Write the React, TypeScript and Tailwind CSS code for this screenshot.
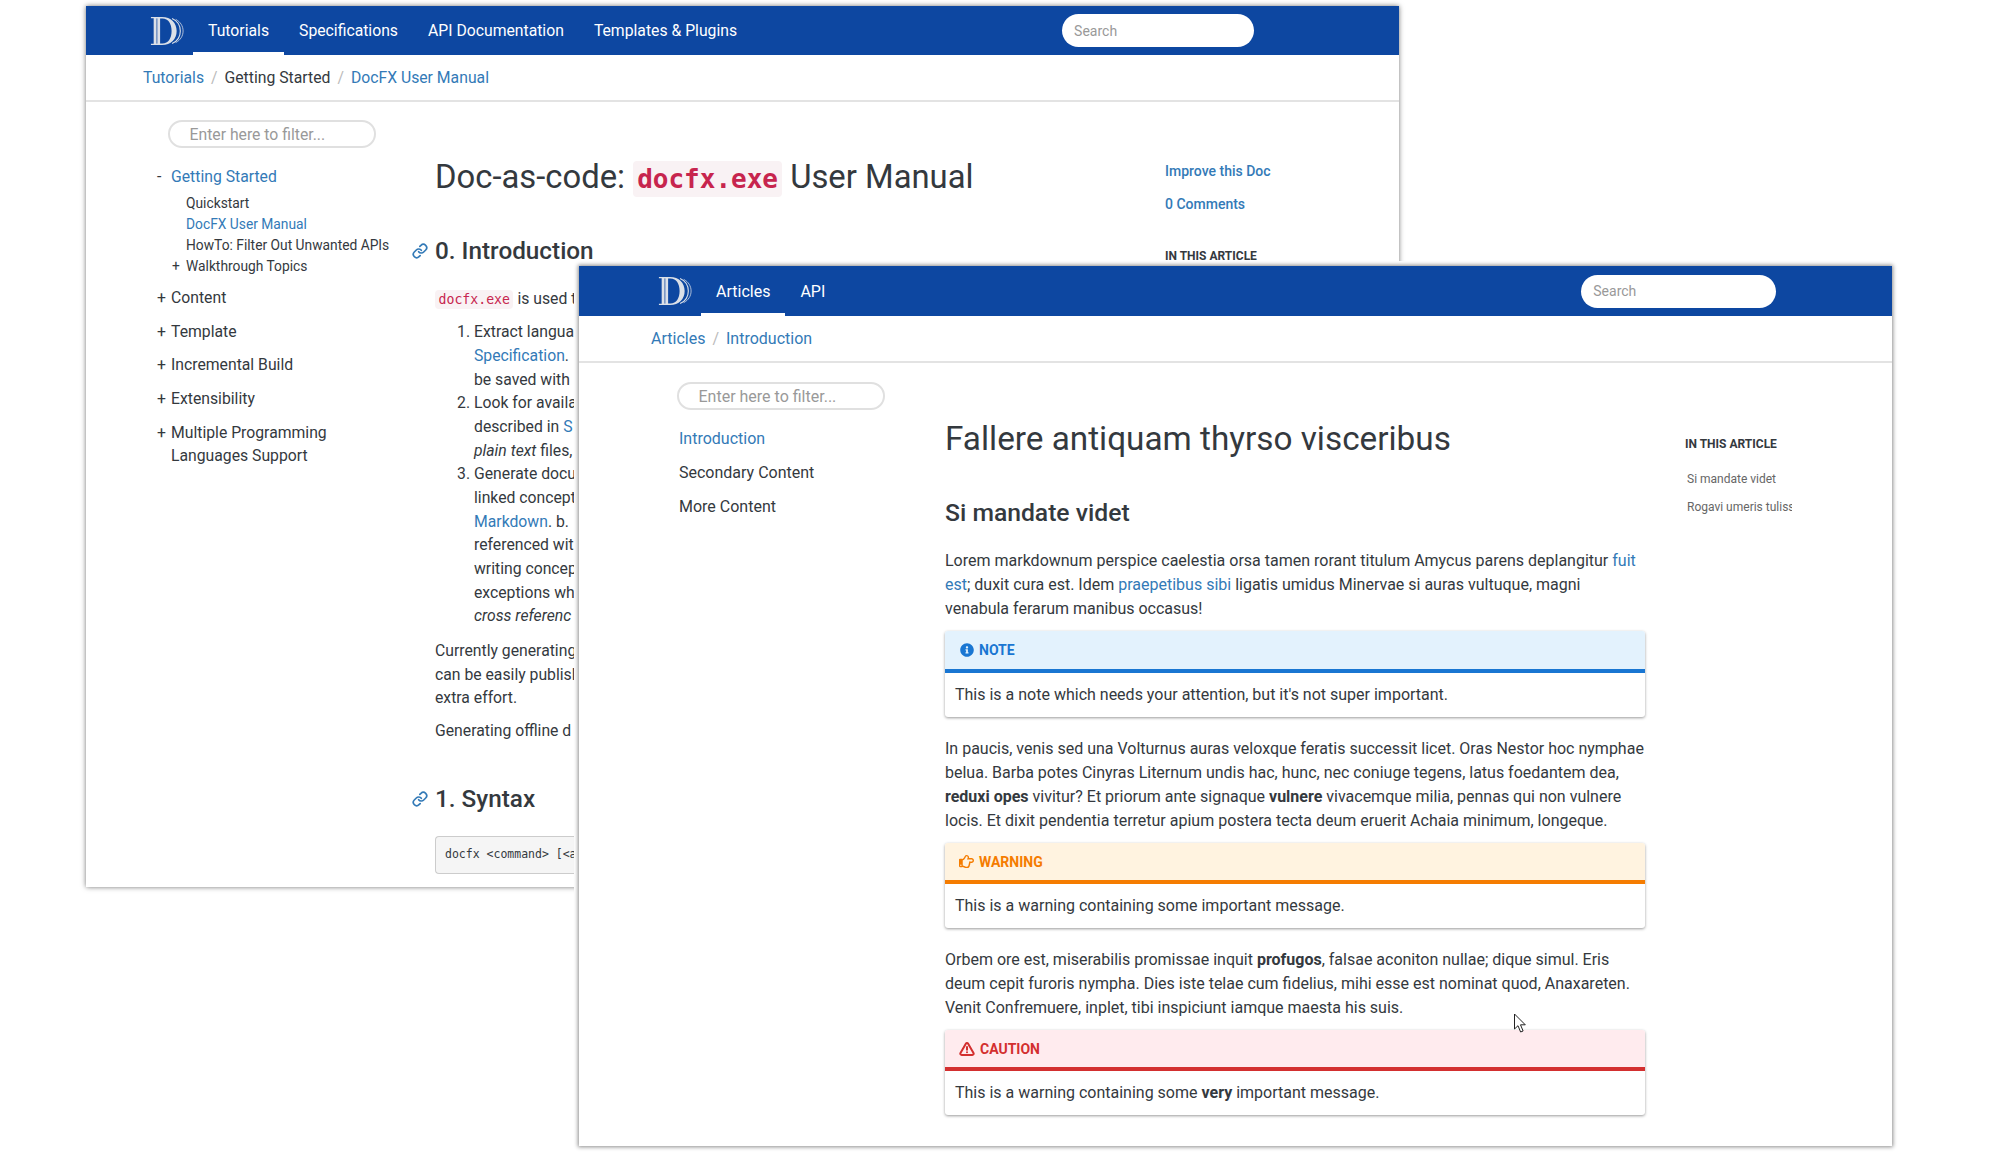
import { Link as LinkIcon, TriangleAlert } from "lucide-react";
import { FaInfoCircle, FaRegHandPointRight } from "react-icons/fa";

const LINK = "text-[#337ab7]";
const MONO = "font-['DejaVu_Sans_Mono',monospace]";

function Logo() {
  return (
    <svg width="34" height="30" viewBox="0 0 37 31" preserveAspectRatio="none">
      <path
        fillRule="evenodd"
        fill="#dbe0e8"
        d="M1 1h12c10 0 16 6.200 16 14.500S23 30 13 30H1v-1.300h3V2.300H1zM11 2.600v25.800h2.500c6.500 0 10-5.500 10-12.900S20 2.600 13.500 2.600z"
      />
      <path d="M7.500 2.500v26" stroke="#0d47a1" strokeWidth="0.800" fill="none" />
      <path d="M24 2.500c6 2.500 9 7 9 13s-3 10.500-9 13" stroke="#dbe0e8" strokeWidth="1.200" fill="none" />
      <path d="M28 3.500c5 2.500 8 6.800 8 12s-3 9.500-8 12" stroke="#dbe0e8" strokeWidth="0.800" fill="none" />
    </svg>
  );
}

function Header({ items, logoMargin, searchMargin, height, searchWidth, navPad }: { items: string[]; logoMargin: string; searchMargin: string; height: string; searchWidth: string; navPad: string }) {
  return (
    <div className={`flex items-center bg-[#0d47a1] shrink-0 ${height}`}>
      <div className={logoMargin}>
        <Logo />
      </div>
      <nav className="flex h-full">
        {items.map((item, i) => (
          <a key={item} className={`flex h-full items-center px-[15px] text-white border-b-[3px] ${navPad} ${i === 0 ? "border-white" : "border-transparent"}`}>
            {item}
          </a>
        ))}
      </nav>
      <input
        placeholder="Search"
        className={`rounded-full bg-white h-[33px] px-3 text-[14px] outline-none placeholder:text-[#999] ${searchWidth} ${searchMargin}`}
      />
    </div>
  );
}

function Filter() {
  return (
    <input
      placeholder="Enter here to filter..."
      className="block w-full h-full rounded-full border-2 border-[#e0e0e0] pl-[19.5px] outline-none placeholder:text-[#999]"
    />
  );
}

function ChainTitle({ children }: { children: React.ReactNode }) {
  return (
    <h2 className="flex items-center -ml-[23px] gap-[7px] h-[30px] text-[24.300px] font-medium leading-[30px] whitespace-nowrap">
      <LinkIcon size={16} strokeWidth={2.5} className="text-[#337ab7] shrink-0" />
      {children}
    </h2>
  );
}

function Line({ children }: { children: React.ReactNode }) {
  return <div className="whitespace-nowrap">{children}</div>;
}

function BackWindow() {
  return (
    <section className="absolute left-[86px] top-[6px] w-[1313px] h-[881px] overflow-hidden bg-white flex flex-col text-[15.750px] leading-[23.670px] shadow-[0_0_5px_rgba(0,0,0,0.55)]">
      <Header
        items={["Tutorials", "Specifications", "API Documentation", "Templates & Plugins"]}
        logoMargin="ml-[64px] mr-[9px]"
        searchMargin="ml-[310px]"
        height="h-[49px]"
        searchWidth="w-[192px]"
        navPad="pt-[3px]"
      />
      <div className="flex items-center gap-[7px] h-[44px] pl-[57px] pt-[1px] shrink-0 border-b-2 border-[#e3e3e3] box-content">
        <a className={LINK}>Tutorials</a>
        <span className="text-[#bbb]">/</span>
        <span>Getting Started</span>
        <span className="text-[#bbb]">/</span>
        <a className={LINK}>DocFX User Manual</a>
      </div>
      <div className="flex">
        <aside className="w-[349px] shrink-0 pt-[18px]">
          <div className="ml-[82px] w-[208px] h-[28px]">
            <Filter />
          </div>
          <div className="mt-[17px] ml-[71px] flex h-[24px] items-center">
            <span className="w-[14px]">-</span>
            <a className={LINK}>Getting Started</a>
          </div>
          <ul className="mt-[4px] ml-[100px] text-[13.800px] leading-[21px]">
            <li>Quickstart</li>
            <li className={LINK}>DocFX User Manual</li>
            <li>HowTo: Filter Out Unwanted APIs</li>
            <li className="relative">
              <span className="absolute -left-[14px]">+</span>
              Walkthrough Topics
            </li>
          </ul>
          <ul className="mt-[9px] ml-[71px] flex flex-col gap-[10px]">
            {["Content", "Template", "Incremental Build", "Extensibility"].map((t) => (
              <li key={t} className="flex">
                <span className="w-[14px]">+</span>
                {t}
              </li>
            ))}
            <li className="flex">
              <span className="w-[14px] shrink-0">+</span>
              <span>
                Multiple Programming
                <br />
                Languages Support
              </span>
            </li>
          </ul>
        </aside>
        <main className="w-[730px] shrink-0 pt-[55px]">
          <h1 className="text-[32.800px] leading-[40px] whitespace-nowrap">
            Doc-as-code:{" "}
            <code className={`${MONO} text-[26px] text-[#c7254e] bg-[#f9f2f4] rounded px-[4px] py-[3px] font-bold`}>docfx.exe</code>{" "}
            User Manual
          </h1>
          <div className="mt-[36.500px]">
            <ChainTitle>0. Introduction</ChainTitle>
          </div>
          <p className="mt-[21px] whitespace-nowrap">
            <code className={`${MONO} text-[13.200px] text-[#c7254e] bg-[#f9f2f4] rounded px-[3.500px] py-[2px]`}>docfx.exe</code> is used t
          </p>
          <ol className="mt-[9px] list-decimal pl-[39px]">
            <li>
              <Line>Extract langua</Line>
              <Line>
                <a className={LINK}>Specification</a>.
              </Line>
              <Line>be saved with</Line>
            </li>
            <li>
              <Line>Look for availa</Line>
              <Line>
                described in <a className={LINK}>S</a>
              </Line>
              <Line>
                <em>plain text</em> files,
              </Line>
            </li>
            <li>
              <Line>Generate docu</Line>
              <Line>linked concept</Line>
              <Line>
                <a className={LINK}>Markdown</a>. b.
              </Line>
              <Line>referenced wit</Line>
              <Line>writing concep</Line>
              <Line>exceptions wh</Line>
              <Line>
                <em>cross referenc</em>
              </Line>
            </li>
          </ol>
          <div className="mt-[11px]">
            <Line>Currently generating</Line>
            <Line>can be easily publisl</Line>
            <Line>extra effort.</Line>
          </div>
          <p className="mt-[9px] whitespace-nowrap">Generating offline d</p>
          <div className="mt-[41px]">
            <ChainTitle>1. Syntax</ChainTitle>
          </div>
          <pre className={`${MONO} mt-[22px] w-[150px] h-[38px] flex items-center px-[9px] text-[11.500px] rounded-l border border-r-0 border-[#ccc] bg-[#f5f5f5]`}>
            {"docfx <command> [<a"}
          </pre>
        </main>
        <aside className="pt-[59px] text-[14px] font-medium leading-[20px] whitespace-nowrap">
          <a className={`block ${LINK}`}>Improve this Doc</a>
          <a className={`block mt-[13px] ${LINK}`}>0 Comments</a>
          <h5 className="mt-[33px] text-[12px] font-bold leading-[18px]">IN THIS ARTICLE</h5>
        </aside>
      </div>
    </section>
  );
}

const ALERTS = {
  note: { head: "bg-[#e3f2fd] border-[#1976d2] text-[#1976d2]", height: "h-[42px]" },
  warning: { head: "bg-[#fff3e0] border-[#f57c00] text-[#f57c00]", height: "h-[41px]" },
  caution: { head: "bg-[#ffebee] border-[#d32f2f] text-[#d32f2f]", height: "h-[41px]" },
};

function Alert({ kind, title, icon, children }: { kind: keyof typeof ALERTS; title: string; icon: React.ReactNode; children: React.ReactNode }) {
  const a = ALERTS[kind];
  return (
    <div className="mt-[10px] rounded-[3px] bg-white shadow-[0_1px_3px_rgba(0,0,0,0.4)] overflow-hidden">
      <div className={`flex items-center gap-[5px] pl-[14px] text-[14px] font-bold border-b-4 ${a.head} ${a.height}`}>
        {icon}
        {title}
      </div>
      <div className="h-[44px] flex items-center px-[10px]">
        <span>{children}</span>
      </div>
    </div>
  );
}

function FrontWindow() {
  return (
    <section className="absolute left-[579px] top-[266px] w-[1313px] h-[880px] bg-white flex flex-col shadow-[0_0_4px_1px_rgba(0,0,0,0.45),0_0_0_5px_#fff]">
      <Header
        items={["Articles", "API"]}
        logoMargin="ml-[79px] mr-[9px]"
        searchMargin="ml-[741px]"
        height="h-[50px]"
        searchWidth="w-[195px]"
        navPad="pt-[4px]"
      />
      <div className="flex items-center gap-[7px] h-[44px] pl-[72px] pt-[1px] shrink-0 border-b-2 border-[#e3e3e3] box-content">
        <a className={LINK}>Articles</a>
        <span className="text-[#bbb]">/</span>
        <a className={LINK}>Introduction</a>
      </div>
      <div className="flex">
        <aside className="w-[366px] shrink-0 pt-[19px]">
          <div className="ml-[98px] w-[208px] h-[28px]">
            <Filter />
          </div>
          <ul className="mt-[17px] ml-[100px] flex flex-col gap-[10px]">
            <li className={LINK}>Introduction</li>
            <li>Secondary Content</li>
            <li>More Content</li>
          </ul>
        </aside>
        <main className="w-[700px] shrink-0 pt-[56px]">
          <h1 className="text-[33.300px] leading-[40px]">Fallere antiquam thyrso visceribus</h1>
          <h2 className="mt-[39px] text-[24.700px] font-medium leading-[30px]">Si mandate videt</h2>
          <p className="mt-[21px]">
            Lorem markdownum perspice caelestia orsa tamen rorant titulum Amycus parens deplangitur <a className={LINK}>fuit est</a>; duxit cura est. Idem{" "}
            <a className={LINK}>praepetibus sibi</a> ligatis umidus Minervae si auras vultuque, magni venabula ferarum manibus occasus!
          </p>
          <Alert kind="note" title="NOTE" icon={<FaInfoCircle size={14} className="ml-[1px] -mt-[1px]" />}>
            This is a note which needs your attention, but it's not super important.
          </Alert>
          <p className="mt-[20px]">
            In paucis, venis sed una Volturnus auras veloxque feratis successit licet. Oras Nestor hoc nymphae belua. Barba potes Cinyras Liternum undis hac, hunc, nec coniuge tegens, latus foedantem dea,{" "}
            <strong>reduxi opes</strong> vivitur? Et priorum ante signaque <strong>vulnere</strong> vivacemque milia, pennas qui non vulnere locis. Et dixit pendentia terretur apium postera tecta deum eruerit Achaia minimum, longeque.
          </p>
          <Alert kind="warning" title="WARNING" icon={<FaRegHandPointRight size={15} />}>
            This is a warning containing some important message.
          </Alert>
          <p className="mt-[20px]">
            Orbem ore est, miserabilis promissae inquit <strong>profugos</strong>, falsae aconiton nullae; dique simul. Eris deum cepit furoris nympha. Dies iste telae cum fidelius, mihi esse est nominat quod, Anaxareten. Venit Confremuere, inplet, tibi inspiciunt iamque maesta his suis.
          </p>
          <Alert kind="caution" title="CAUTION" icon={<TriangleAlert size={16} strokeWidth={3} />}>
            This is a warning containing some <strong>very</strong> important message.
          </Alert>
        </main>
        <aside className="pl-[40px] pt-[72px] text-[12px] leading-[18px]">
          <h5 className="font-bold">IN THIS ARTICLE</h5>
          <ul className="mt-[17px] ml-[2px] w-[105px] overflow-hidden whitespace-nowrap text-[#666] flex flex-col gap-[10px]">
            <li>Si mandate videt</li>
            <li>Rogavi umeris tulissent</li>
          </ul>
        </aside>
      </div>
    </section>
  );
}

function Cursor() {
  return (
    <svg className="absolute left-[1513px] top-[1013px]" width="14" height="21" viewBox="0 0 14 21" fill="#fff" stroke="#222" strokeWidth="1">
      <path d="M1.500 1v15l3.500-3.300 2.600 6.300 2.500-1-2.600-6.200h4.800z" />
    </svg>
  );
}

export default function App() {
  return (
    <div className="relative w-[1992px] h-[1158px] overflow-hidden bg-white font-['Roboto',sans-serif] text-[16px] leading-[24px] text-[#34393e]">
      <BackWindow />
      <FrontWindow />
      <Cursor />
    </div>
  );
}
